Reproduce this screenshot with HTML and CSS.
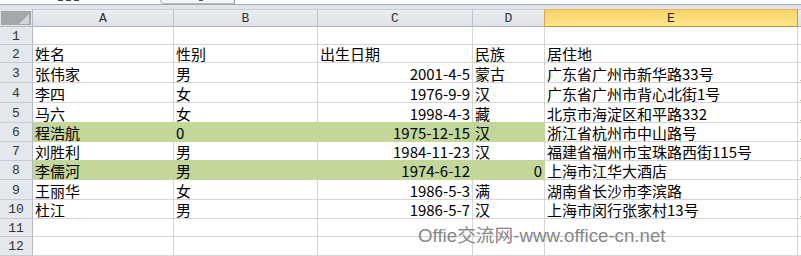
FILE: index.html
```html
<!DOCTYPE html>
<html lang="zh-CN">
<head>
    <meta charset="UTF-8">
    <meta name="viewport" content="width=device-width, initial-scale=1.0">
    <title>员工信息表</title>
    <link rel="stylesheet" href="styles.css">
</head>
<body>
    <div class="formula-strip">
        <div class="name-box"><span></span><span></span><span></span></div>
        <div class="fx-box"><span></span></div>
    </div>

    <div class="sheet">
        <div class="grid">
            <!-- column headers -->
            <div class="corner"></div>
            <div class="col-head">A</div>
            <div class="col-head">B</div>
            <div class="col-head">C</div>
            <div class="col-head before-sel">D</div>
            <div class="col-head selected">E</div>
            <div class="col-head"></div>

            <div class="row-head">1</div>
            <div class="cell"></div><div class="cell"></div><div class="cell"></div><div class="cell"></div><div class="cell"></div><div class="cell"></div>

            <div class="row-head">2</div>
            <div class="cell">姓名</div><div class="cell">性别</div><div class="cell">出生日期</div><div class="cell">民族</div><div class="cell">居住地</div><div class="cell"></div>

            <div class="row-head">3</div>
            <div class="cell">张伟家</div><div class="cell">男</div><div class="cell num">2001-4-5</div><div class="cell">蒙古</div><div class="cell">广东省广州市新华路33号</div><div class="cell edge">上</div>

            <div class="row-head">4</div>
            <div class="cell">李四</div><div class="cell">女</div><div class="cell num">1976-9-9</div><div class="cell">汉</div><div class="cell">广东省广州市背心北街1号</div><div class="cell edge">上</div>

            <div class="row-head">5</div>
            <div class="cell">马六</div><div class="cell">女</div><div class="cell num">1998-4-3</div><div class="cell">藏</div><div class="cell">北京市海淀区和平路332</div><div class="cell edge">上</div>

            <div class="row-head">6</div>
            <div class="cell fill">程浩航</div><div class="cell fill">0</div><div class="cell fill num">1975-12-15</div><div class="cell fill">汉</div><div class="cell">浙江省杭州市中山路号</div><div class="cell edge">上</div>

            <div class="row-head">7</div>
            <div class="cell">刘胜利</div><div class="cell">男</div><div class="cell num">1984-11-23</div><div class="cell">汉</div><div class="cell">福建省福州市宝珠路西街115号</div><div class="cell edge">上</div>

            <div class="row-head">8</div>
            <div class="cell fill">李儒河</div><div class="cell fill">男</div><div class="cell fill num">1974-6-12</div><div class="cell fill num">0</div><div class="cell">上海市江华大酒店</div><div class="cell edge">上</div>

            <div class="row-head">9</div>
            <div class="cell">王丽华</div><div class="cell">女</div><div class="cell num">1986-5-3</div><div class="cell">满</div><div class="cell">湖南省长沙市李滨路</div><div class="cell edge">上</div>

            <div class="row-head">10</div>
            <div class="cell">杜江</div><div class="cell">男</div><div class="cell num">1986-5-7</div><div class="cell">汉</div><div class="cell">上海市闵行张家村13号</div><div class="cell edge">上</div>

            <div class="row-head">11</div>
            <div class="cell"></div><div class="cell"></div><div class="cell"></div><div class="cell"></div><div class="cell"></div><div class="cell"></div>

            <div class="row-head">12</div>
            <div class="cell"></div><div class="cell"></div><div class="cell"></div><div class="cell"></div><div class="cell"></div><div class="cell"></div>
        </div>

        <div class="watermark">Offie交流网-www.office-cn.net</div>
    </div>
</body>
</html>
```

FILE: styles.css
```css
body {
    margin: 0;
    width: 801px;
    height: 256px;
    overflow: hidden;
    background: white;
    font-family: "Noto Sans CJK SC", sans-serif;
}
.formula-strip {
    height: 4px;
    display: flex;
    border-bottom: 1px solid #a4aab2;
    overflow: hidden;
}
.name-box {
    width: 160px;
    display: flex;
    gap: 3px;
    padding-left: 58px;
    box-sizing: border-box;
}
.name-box span {
    width: 5px;
    height: 1px;
    background: #444;
}
.fx-box {
    width: 75px;
    height: 4px;
    box-sizing: border-box;
    border-left: 1px solid #b4b9bf;
    border-bottom: 1px solid #b4b9bf;
    border-right: 1px solid #8d9399;
    border-bottom-left-radius: 10px;
    background: #f3f4f6;
    position: relative;
}
.fx-box span {
    position: absolute;
    left: 38px;
    top: 0;
    width: 4px;
    height: 1px;
    background: #555;
}
.sheet {
    position: relative;
    padding-top: 4px;
    background: #e1e5ea;
}
.grid {
    display: grid;
    grid-template-columns: 33px 141px 144px 155px 72px 253px 1fr;
    grid-template-rows: 18px 18px 18px 20px 20px 20px 19px 19px 19px 20px 19px 18px 19px;
}
.corner {
    position: relative;
    border-right: 1px solid #b5bbc4;
    border-bottom: 1px solid #b5bbc4;
    background: #e1e5ea;
}
.corner::before {
    content: "";
    position: absolute;
    left: 1px;
    top: 2px;
    width: 30px;
    height: 14px;
    background: #a5a7aa;
}
.corner::after {
    content: "";
    position: absolute;
    right: 3px;
    top: 5px;
    border-left: 10px solid transparent;
    border-bottom: 10px solid #d2d5d9;
}
.col-head {
    display: flex;
    align-items: center;
    justify-content: center;
    border-right: 1px solid #bcc2ca;
    border-bottom: 1px solid #b0b6be;
    border-top: 1px solid #c9ced5;
    background: linear-gradient(#eaedf1, #dfe3e8);
    font-family: "Liberation Mono", monospace;
    font-size: 13px;
    color: #333;
}
.col-head.before-sel {
    border-right-color: #e2a845;
}
.col-head.selected {
    background: linear-gradient(#f9d26a, #fee68b);
    border-top-color: #eeb44d;
    border-right-color: #c79736;
    border-bottom-color: #c4912f;
    color: #222;
}
.row-head {
    display: flex;
    align-items: center;
    justify-content: center;
    padding-top: 1px;
    box-sizing: border-box;
    border-right: 1px solid #b5bbc4;
    border-bottom: 1px solid #c6cbd2;
    background: #e4e8ed;
    font-family: "Liberation Mono", monospace;
    font-size: 13px;
    color: #333;
}
.cell {
    display: flex;
    align-items: flex-end;
    padding: 0 2px;
    box-sizing: border-box;
    border-right: 1px solid #d5d5d5;
    border-bottom: 1px solid #d5d5d5;
    background: white;
    font-size: 15px;
    line-height: 17px;
    color: #000;
    white-space: nowrap;
}
.cell.edge {
    overflow: hidden;
}
.cell.num {
    justify-content: flex-end;
}
.cell.fill {
    background: #c4d79b;
    border-color: #c4d79b;
    box-shadow: 0 -1px 0 #c4d79b;
}
.watermark {
    position: absolute;
    left: 418px;
    top: 222px;
    font-family: "Liberation Sans", "Noto Sans CJK SC", sans-serif;
    font-size: 18.7px;
    line-height: 18px;
    color: #878787;
    white-space: nowrap;
}
```
